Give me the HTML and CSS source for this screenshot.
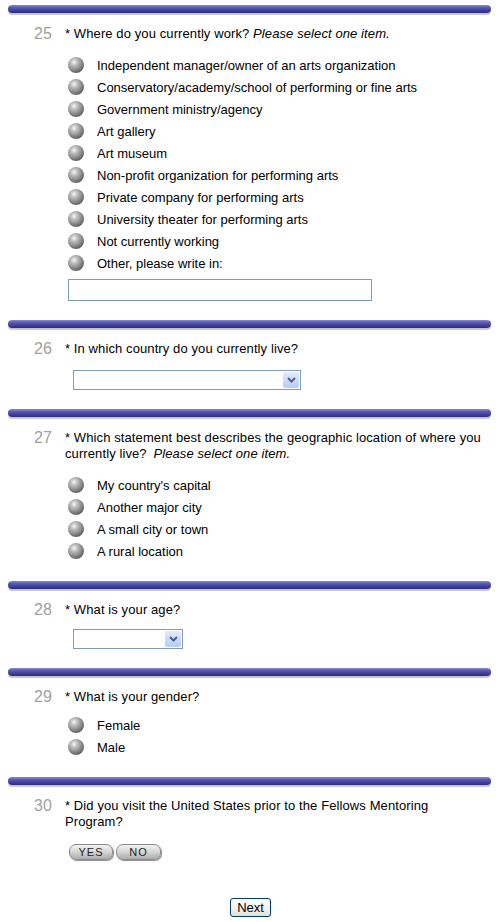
FILE: index.html
```html
<!DOCTYPE html>
<html>
<head>
<meta charset="utf-8">
<link rel="stylesheet" href="styles.css">
</head>
<body>
<div class="page">

  <div class="section">
    <div class="bar"></div>
    <div class="q">
      <div class="num">25</div>
      <div class="qtext">* Where do you currently work? <i>Please select one item.</i></div>
    </div>
    <ul class="options">
      <li><span class="radio"></span>Independent manager/owner of an arts organization</li>
      <li><span class="radio"></span>Conservatory/academy/school of performing or fine arts</li>
      <li><span class="radio"></span>Government ministry/agency</li>
      <li><span class="radio"></span>Art gallery</li>
      <li><span class="radio"></span>Art museum</li>
      <li><span class="radio"></span>Non-profit organization for performing arts</li>
      <li><span class="radio"></span>Private company for performing arts</li>
      <li><span class="radio"></span>University theater for performing arts</li>
      <li><span class="radio"></span>Not currently working</li>
      <li><span class="radio"></span>Other, please write in:</li>
    </ul>
    <div class="textin"></div>
  </div>

  <div class="section">
    <div class="bar"></div>
    <div class="q">
      <div class="num">26</div>
      <div class="qtext">* In which country do you currently live?</div>
    </div>
    <div class="select wide"><span class="sel-btn"><svg width="9" height="6" viewBox="0 0 9 6"><path d="M1 1 L4.5 4.5 L8 1" fill="none" stroke="#4d6185" stroke-width="2"/></svg></span></div>
  </div>

  <div class="section">
    <div class="bar"></div>
    <div class="q">
      <div class="num">27</div>
      <div class="qtext">* Which statement best describes the geographic location of where you currently live? <i class="hint">Please select one item.</i></div>
    </div>
    <ul class="options">
      <li><span class="radio"></span>My country's capital</li>
      <li><span class="radio"></span>Another major city</li>
      <li><span class="radio"></span>A small city or town</li>
      <li><span class="radio"></span>A rural location</li>
    </ul>
  </div>

  <div class="section">
    <div class="bar"></div>
    <div class="q">
      <div class="num">28</div>
      <div class="qtext">* What is your age?</div>
    </div>
    <div class="select narrow"><span class="sel-btn"><svg width="9" height="6" viewBox="0 0 9 6"><path d="M1 1 L4.5 4.5 L8 1" fill="none" stroke="#4d6185" stroke-width="2"/></svg></span></div>
  </div>

  <div class="section">
    <div class="bar"></div>
    <div class="q">
      <div class="num">29</div>
      <div class="qtext">* What is your gender?</div>
    </div>
    <ul class="options tight">
      <li><span class="radio"></span>Female</li>
      <li><span class="radio"></span>Male</li>
    </ul>
  </div>

  <div class="section last">
    <div class="bar"></div>
    <div class="q">
      <div class="num">30</div>
      <div class="qtext">* Did you visit the United States prior to the Fellows Mentoring Program?</div>
    </div>
    <div class="yn">
      <span class="pill yes">YES</span>
      <span class="pill no">NO</span>
    </div>
  </div>

  <div class="nextwrap">
    <button class="next">Next</button>
  </div>

</div>
</body>
</html>
```

FILE: styles.css
```css
html, body {
  margin: 0;
  padding: 0;
  background: #ffffff;
}

body {
  font-family: "Liberation Sans", Arial, sans-serif;
  font-size: 13px;
  color: #000;
}

.page {
  width: 504px;
  padding-top: 5px;
}

.section {
  padding-bottom: 19px;
}

.section.last {
  padding-bottom: 0;
}

.bar {
  margin-left: 8px;
  width: 483px;
  height: 8px;
  border-radius: 4px;
  background: linear-gradient(to bottom, #8a8ad0 0%, #5c5cb4 30%, #45459e 60%, #2c2c7e 100%);
  box-shadow: 0 2px 1px rgba(90, 90, 90, 0.35);
}

.q {
  display: flex;
  margin-top: 13px;
}

.num {
  width: 31px;
  padding-left: 34px;
  flex: none;
  font-size: 16px;
  line-height: 16px;
  color: #a0a0a0;
}

.qtext {
  width: 420px;
  line-height: 16px;
  letter-spacing: 0.1px;
}

.hint {
  margin-left: 3px;
}

.options {
  list-style: none;
  margin: 12px 0 0 0;
  padding: 0 0 0 68px;
}

.options.tight {
  margin-top: 9px;
}

.options li {
  display: flex;
  align-items: center;
  height: 22px;
}

.radio {
  width: 16px;
  height: 16px;
  border-radius: 50%;
  margin-right: 13px;
  flex: none;
  background: radial-gradient(circle at 38% 32%, #f6f6f6 0%, #c0c0c0 22%, #858585 55%, #505050 85%, #353535 100%);
}

.textin {
  margin: 5px 0 0 68px;
  width: 302px;
  height: 20px;
  border: 1px solid #7f9db9;
  background: #fff;
}

.select {
  margin: 13px 0 0 73px;
  height: 18px;
  border: 1px solid #7f9db9;
  background: #fff;
  display: flex;
  justify-content: flex-end;
  align-items: center;
  padding-right: 1px;
}

.select.wide {
  width: 225px;
}

.select.narrow {
  width: 107px;
  margin-top: 11px;
}

.sel-btn {
  width: 16px;
  height: 16px;
  border-radius: 2px;
  background: linear-gradient(to bottom, #e3ebfc 0%, #c8d8f8 60%, #b8cbf3 100%);
  display: flex;
  align-items: center;
  justify-content: center;
}

.yn {
  display: flex;
  gap: 3px;
  margin: 14px 0 0 69px;
}

.pill {
  display: flex;
  align-items: center;
  justify-content: center;
  height: 14px;
  border-radius: 7px;
  font-size: 11px;
  color: #222;
  letter-spacing: 1px;
  background: linear-gradient(to bottom, #f4f4f4 0%, #d8d8d8 45%, #adadad 100%);
  border: 1px solid #8a8a8a;
  box-shadow: 1px 1px 1px rgba(0, 0, 0, 0.45);
}

.pill.yes {
  width: 42px;
}

.pill.no {
  width: 43px;
}

.nextwrap {
  display: flex;
  justify-content: center;
  margin-top: 38px;
  padding-right: 3px;
}

.next {
  width: 41px;
  height: 19px;
  padding: 0;
  border: 1px solid #003c74;
  border-radius: 3px;
  background: linear-gradient(to bottom, #ffffff 0%, #f2f1ea 60%, #e2dfd2 100%);
  font-family: "Liberation Sans", Arial, sans-serif;
  font-size: 13px;
  color: #000;
  line-height: 17px;
}
```
